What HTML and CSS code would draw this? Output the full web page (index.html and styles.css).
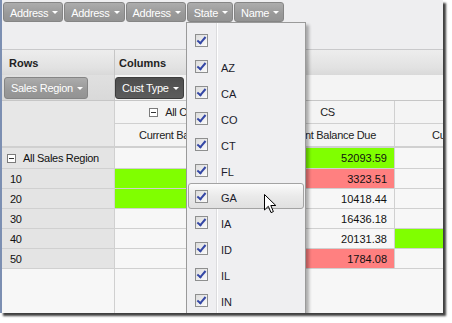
FILE: index.html
```html
<!DOCTYPE html>
<html lang="en">
<head>
	<meta charset="utf-8" />
	<title>Pivot grid</title>
	<link rel="stylesheet" href="styles.css">
</head>
<body>
	<div class="window">
		<div class="fields">
			<span class="field">Address</span>
			<span class="field">Address</span>
			<span class="field">Address</span>
			<span class="field">State</span>
			<span class="field">Name</span>
		</div>
		<div class="areas">
			<div class="area-title">Rows</div>
			<div class="area-title">Columns</div>
			<div class="area-body rows"><span class="field">Sales Region</span></div>
			<div class="area-body cols"><span class="field active">Cust Type</span></div>
		</div>
		<div class="grid">
			<div class="corner"></div>
			<div class="colhead"><span class="toggle"></span>All Cust Type</div>
			<div class="colhead">CS</div>
			<div class="colhead"></div>
			<div class="colhead sub">Current Balance Due</div>
			<div class="colhead sub">Current Balance Due</div>
			<div class="colhead sub">Current Balance Due</div>

			<div class="rowhead total"><span class="toggle"></span>All Sales Region</div>
			<div class="cell"></div>
			<div class="cell green">52093.59</div>
			<div class="cell"></div>

			<div class="rowhead">10</div>
			<div class="cell green"></div>
			<div class="cell red">3323.51</div>
			<div class="cell"></div>

			<div class="rowhead">20</div>
			<div class="cell green"></div>
			<div class="cell">10418.44</div>
			<div class="cell"></div>

			<div class="rowhead">30</div>
			<div class="cell"></div>
			<div class="cell">16436.18</div>
			<div class="cell"></div>

			<div class="rowhead">40</div>
			<div class="cell"></div>
			<div class="cell">20131.38</div>
			<div class="cell green"></div>

			<div class="rowhead">50</div>
			<div class="cell"></div>
			<div class="cell red">1784.08</div>
			<div class="cell"></div>

			<div class="filler-head"></div>
			<div class="filler"></div>
		</div>

		<div class="menu">
			<div class="item"><span class="check"></span><span class="label"></span></div>
			<div class="item"><span class="check"></span><span class="label">AZ</span></div>
			<div class="item"><span class="check"></span><span class="label">CA</span></div>
			<div class="item"><span class="check"></span><span class="label">CO</span></div>
			<div class="item"><span class="check"></span><span class="label">CT</span></div>
			<div class="item"><span class="check"></span><span class="label">FL</span></div>
			<div class="item hover"><span class="check"></span><span class="label">GA</span></div>
			<div class="item"><span class="check"></span><span class="label">IA</span></div>
			<div class="item"><span class="check"></span><span class="label">ID</span></div>
			<div class="item"><span class="check"></span><span class="label">IL</span></div>
			<div class="item"><span class="check"></span><span class="label">IN</span></div>
		</div>

		<svg class="cursor" width="13" height="20" viewBox="0 0 13 20">
			<path d="M0.5 0.5 L0.5 16 L4.3 12.3 L7 18.6 L9.4 17.6 L6.8 11.5 L11.8 11.5 Z" fill="#fff" stroke="#000" stroke-width="1" stroke-linejoin="miter"/>
		</svg>
	</div>
</body>
</html>
```

FILE: styles.css
```css
html, body {
	margin: 0;
	background: #fff;
}
body {
	font-family: "Liberation Sans", Tahoma, Arial, sans-serif;
	font-size: 11px;
	letter-spacing: -0.3px;
	color: #111;
	width: 452px;
	height: 323px;
	overflow: hidden;
}
.window {
	position: relative;
	width: 443px;
	height: 313px;
	box-sizing: border-box;
	border-left: 2px solid #7c8fb2;
	background: #f6f6f6;
	overflow: hidden;
	box-shadow: 3px 3px 2px rgba(0,0,0,.75);
}

/* field list on top */
.fields {
	display: flex;
	gap: 1px;
	height: 50px;
	box-sizing: border-box;
	padding: 2px 0 0 1px;
	background: #eeeef0;
	border-bottom: 1px solid #c9c9cb;
}
.field {
	display: inline-flex;
	align-items: center;
	height: 20px;
	box-sizing: border-box;
	padding: 1px 4px 0 6px;
	border: 1px solid #858585;
	border-radius: 3px;
	background: linear-gradient(#acacac, #999 60%, #939393);
	color: #fff;
	white-space: nowrap;
}
.field::after {
	content: "";
	margin-left: 4px;
	border-left: 3px solid transparent;
	border-right: 3px solid transparent;
	border-top: 3px solid #fff;
}
.field.active {
	background: linear-gradient(#4e4e4e, #5c5c5c);
	border-color: #3c3c3c;
}

/* rows / columns areas */
.areas {
	display: grid;
	grid-template-columns: 113px 1fr;
	grid-template-rows: 25px 25px;
	border-bottom: 1px solid #c6c6c6;
}
.area-title {
	display: flex;
	align-items: center;
	padding-left: 7px;
	font-weight: bold;
	letter-spacing: 0;
	color: #222;
	background: linear-gradient(#ededed, #e2e2e2 70%, #d9d9d9);
}
.area-title:nth-child(2) {
	padding-left: 4px;
}
.area-title:first-child,
.area-body.rows {
	border-right: 1px solid #c6c6c6;
}
.area-body {
	display: flex;
	align-items: center;
	padding-left: 2px;
	background: #f4f4f4;
}
.area-body.rows {
	background: linear-gradient(#e0e0e0, #d9d9d9);
}
.area-body.cols {
	padding-left: 0;
}
.area-body .field {
	height: 22px;
}

/* pivot table */
.grid {
	display: grid;
	grid-template-columns: 113px 146px 134px 172px;
	grid-template-rows: 23px 24px 21px repeat(5, 20px) 60px;
}
.grid > div {
	box-sizing: border-box;
	border-right: 1px solid #d0d0d0;
	border-bottom: 1px solid #d0d0d0;
	display: flex;
	align-items: center;
	white-space: nowrap;
	overflow: hidden;
}
.corner {
	grid-row: span 2;
	background: #e7e7e7;
	border-bottom-width: 2px !important;
}
.colhead {
	justify-content: center;
	background: #f4f4f4;
	color: #222;
}
.colhead.sub {
	border-bottom-width: 2px !important;
}
.rowhead {
	padding-left: 8px;
	background: #e4e4e4;
	color: #111;
}
.rowhead.total {
	padding-left: 5px;
}
.cell {
	justify-content: flex-end;
	padding-right: 7px;
	letter-spacing: 0;
	background: #f7f7f7;
}
.cell.green {
	background: #80ff00;
}
.cell.red {
	background: #ff8080;
}
.filler-head {
	background: #f7f7f7;
}
.filler {
	grid-column: span 3;
	background: #f7f7f7;
	border-right: none !important;
	border-bottom: none !important;
}
.toggle {
	display: inline-block;
	position: relative;
	width: 9px;
	height: 9px;
	box-sizing: border-box;
	border: 1px solid #7b7b7b;
	background: #fff;
	margin-right: 7px;
}
.toggle::after {
	content: "";
	position: absolute;
	left: 1px;
	right: 1px;
	top: 3px;
	height: 1px;
	background: #333;
}

/* filter dropdown */
.menu {
	position: absolute;
	left: 184px;
	top: 22px;
	width: 120px;
	height: 300px;
	box-sizing: border-box;
	padding-top: 4px;
	border: 1px solid #9a9a9a;
	background: linear-gradient(90deg, #efeff1 29px, #dcdcde 29px, #dcdcde 30px, #fff 30px, #fff 31px, #efeff1 31px);
	box-shadow: 3px 3px 3px rgba(0,0,0,.3);
}
.item {
	display: flex;
	align-items: center;
	height: 26px;
	box-sizing: border-box;
	margin: 0 1px;
	padding-left: 6px;
	border: 1px solid transparent;
	border-radius: 3px;
}
.item.hover {
	border-color: #a3a3a3;
	background: linear-gradient(#fbfbfb, #eaeaea 50%, #e0e0e0);
}
.check {
	position: relative;
	width: 13px;
	height: 13px;
	box-sizing: border-box;
	border: 1px solid #8e8f8f;
	background: linear-gradient(135deg, #dcdcdc, #fbfbfb);
	flex: none;
}
.check::after {
	content: "";
	position: absolute;
	left: 3px;
	top: 0;
	width: 3px;
	height: 7px;
	border-right: 2px solid #3447a5;
	border-bottom: 2px solid #3447a5;
	transform: rotate(40deg);
}
.label {
	margin-left: 13px;
	padding-top: 3px;
	letter-spacing: 0;
	color: #1c1c2c;
}
.cursor {
	position: absolute;
	left: 262px;
	top: 194px;
}
```
